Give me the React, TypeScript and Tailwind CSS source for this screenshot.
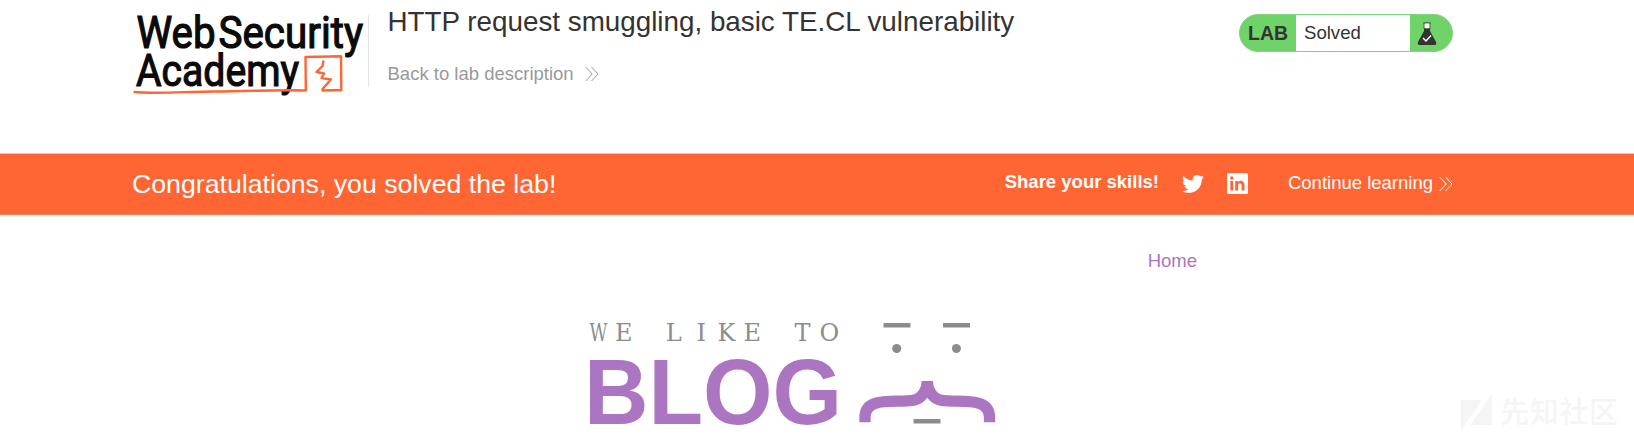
import React from "react";

function AcademyLogo() {
  return (
    <svg width="236" height="100" viewBox="132 0 236 100" className="shrink-0" fill="none">
      <g fill="#0a0a0a" stroke="#0a0a0a" strokeWidth="1.2" fontFamily="Roboto, sans-serif" fontWeight="400" fontSize="43.500">
        <text x="136.500" y="48" textLength="79" lengthAdjust="spacingAndGlyphs">Web</text>
        <text x="218.500" y="48" textLength="144.500" lengthAdjust="spacingAndGlyphs">Security</text>
        <text x="136" y="86" textLength="163" lengthAdjust="spacingAndGlyphs">Academy</text>
      </g>
      <path d="M133.500 92C160 94 185 91.500 215 91.500C250 91.500 275 89.500 305.800 90.500L305.500 57L341 56.200L341.300 90L322.500 90.500L322.500 89L331 79.500L321.500 78L324 73.500L316.500 72L322.500 66L323.500 60.500" stroke="#ff6633" strokeWidth="2.400" strokeLinejoin="round" />
    </svg>
  );
}

function Chevrons({ className }: { className: string }) {
  return (
    <svg width="14" height="16" viewBox="0 0 14 16" fill="none" stroke="currentColor" className={className}>
      <path d="M.7 1 7.200 8 .7 15M6.500 1 13 8 6.500 15" strokeWidth="1" />
    </svg>
  );
}

function Flask() {
  return (
    <svg width="20" height="24" viewBox="0 0 20 24">
      <path d="M6.500 1H13.500M7.200 1V7M12.800 1V7" stroke="#333332" fill="none" />
      <path d="M7.500 1.500H12.500V6H7.500Z" fill="#fff" />
      <path d="M7 6.500H13V9L19 20Q20 23 17.500 23H2.500Q0 23 1 20L7 9Z" fill="#333332" />
      <path d="M6 16 9 19 14 13.500" fill="none" stroke="#fff" strokeWidth="1.500" />
    </svg>
  );
}

function LabStatus() {
  return (
    <div className="mt-[14px] flex h-[38px] w-[214px] overflow-hidden rounded-[19px] border border-[#7fd67a] bg-[#6fd36a]">
      <div className="w-14 shrink-0 pl-[8px] text-[19.5px] leading-[37px] font-bold">LAB</div>
      <div className="w-[114px] shrink-0 bg-white pl-2 text-[18.6px] leading-[36px]">Solved</div>
      <div className="pt-[7px] pl-[7px]"><Flask /></div>
    </div>
  );
}

function BlogLogo() {
  return (
    <svg width="412" height="120" viewBox="586 314 412 120" fill="none" className="overflow-visible">
      <g fontFamily="'DejaVu Serif', serif" fontSize="24" fill="#8b8d8c">
        <text y="341"><tspan x="589.500" textLength="18" lengthAdjust="spacingAndGlyphs">W</tspan><tspan x="615 640 665.700 696.500 717.500 743.500 770 794.500 819.500">E LIKE TO</tspan></text>
      </g>
      <text x="584" y="423.500" fontFamily="'Liberation Sans', sans-serif" fontWeight="700" fontSize="92" fill="#ac75c2" textLength="258" lengthAdjust="spacingAndGlyphs">BLOG</text>
      <path d="M883.500 325.300H910.500M943 325.300H970M913.500 421.300H940.500" stroke="#8b8d8c" strokeWidth="4.600" />
      <circle cx="896.700" cy="348.500" r="4.500" fill="#8b8d8c" />
      <circle cx="956.400" cy="348.500" r="4.500" fill="#8b8d8c" />
      <path d="M865 422.300V417C865 396 895 403 913 400.300C922 399 927.300 390 927.300 381C927.300 390 932.600 399 941.600 400.300C959 403 989.500 396 989.500 417V422.300" stroke="#ac75c2" strokeWidth="11.300" />
    </svg>
  );
}

function Watermark() {
  return (
    <svg width="164" height="44" viewBox="1456 390 164 44" className="absolute right-[14px] bottom-0">
      <path d="M1461 400H1482L1461 430ZM1492 394V425H1470Z" fill="#f5f5f5" />
      <text x="1500" y="423" fontFamily="'Noto Sans CJK SC', sans-serif" fontWeight="500" fontSize="29" fill="#f5f5f5" textLength="118">先知社区</text>
    </svg>
  );
}

export default function App() {
  return (
    <div className="relative h-[434px] overflow-hidden bg-white font-['Liberation_Sans',Arial,sans-serif] text-[#333332]">
      <header className="flex h-[153px] items-start pr-[181px] pl-[132px]">
        <AcademyLogo />
        <div className="mt-[15px] h-[72px] w-px bg-[#e6e6e6]" />
        <div className="ml-[18.5px] grow">
          <h1 className="pt-[5px] text-[27.8px] leading-[34px] whitespace-nowrap">HTTP request smuggling, basic TE.CL vulnerability</h1>
          <a className="mt-[24px] flex items-center text-[18.5px] leading-[22px] text-[#999]">
            Back to lab description
            <Chevrons className="ml-[11px]" />
          </a>
        </div>
        <LabStatus />
      </header>
      <section className="flex h-[62px] items-center border-t border-t-[#ffc0a8] border-b border-b-[#ff7d52] bg-[#ff6633] pr-[181px] pl-[132px] text-[18.5px] text-white">
        <p className="grow text-[26.7px]">Congratulations, you solved the lab!</p>
        <span className="-mt-1 font-bold">Share your skills!</span>
        <svg className="-mt-px ml-[23px]" width="22" height="22" viewBox="0 0 24 24" fill="currentColor">
          <path d="M23.950 4.570a10 10 0 0 1-2.820.77 4.960 4.960 0 0 0 2.160-2.720c-.95.55-2 .95-3.130 1.180a4.920 4.920 0 0 0-8.380 4.480C7.690 8.090 4.070 6.130 1.640 3.160a4.920 4.920 0 0 0 1.520 6.570 4.900 4.900 0 0 1-2.230-.61v.06a4.920 4.920 0 0 0 3.950 4.830 5 5 0 0 1-2.210.08 4.940 4.940 0 0 0 4.600 3.420A9.870 9.870 0 0 1 0 19.540a13.990 13.990 0 0 0 7.550 2.210c9.050 0 14-7.500 14-13.980 0-.21 0-.42-.02-.63a9.940 9.940 0 0 0 2.460-2.550z" />
        </svg>
        <svg className="-mt-px ml-[23px]" width="21" height="21" viewBox="0 0 21 21">
          <rect width="21" height="21" rx="1.500" fill="#fff" />
          <path d="M3.300 8H6.200V17.500H3.300ZM8.200 8H11V9.300C12.500 6.900 17.500 7 17.500 11.700V17.500H14.600V12.500C14.600 9.400 11.100 9.600 11.100 12.500V17.500H8.200Z" fill="#ff6633" />
          <circle cx="4.750" cy="5" r="1.700" fill="#ff6633" />
        </svg>
        <span className="ml-[40px] -mt-0.5">Continue learning</span>
        <Chevrons className="ml-[6px]" />
      </section>
      <nav className="flex justify-end pt-[35px] pr-[437px] text-[18.5px] leading-[22px] text-[#ac75c2]">
        <a>Home</a>
      </nav>
      <div className="mt-[42px] pl-[586px]"><BlogLogo /></div>
      <Watermark />
    </div>
  );
}
